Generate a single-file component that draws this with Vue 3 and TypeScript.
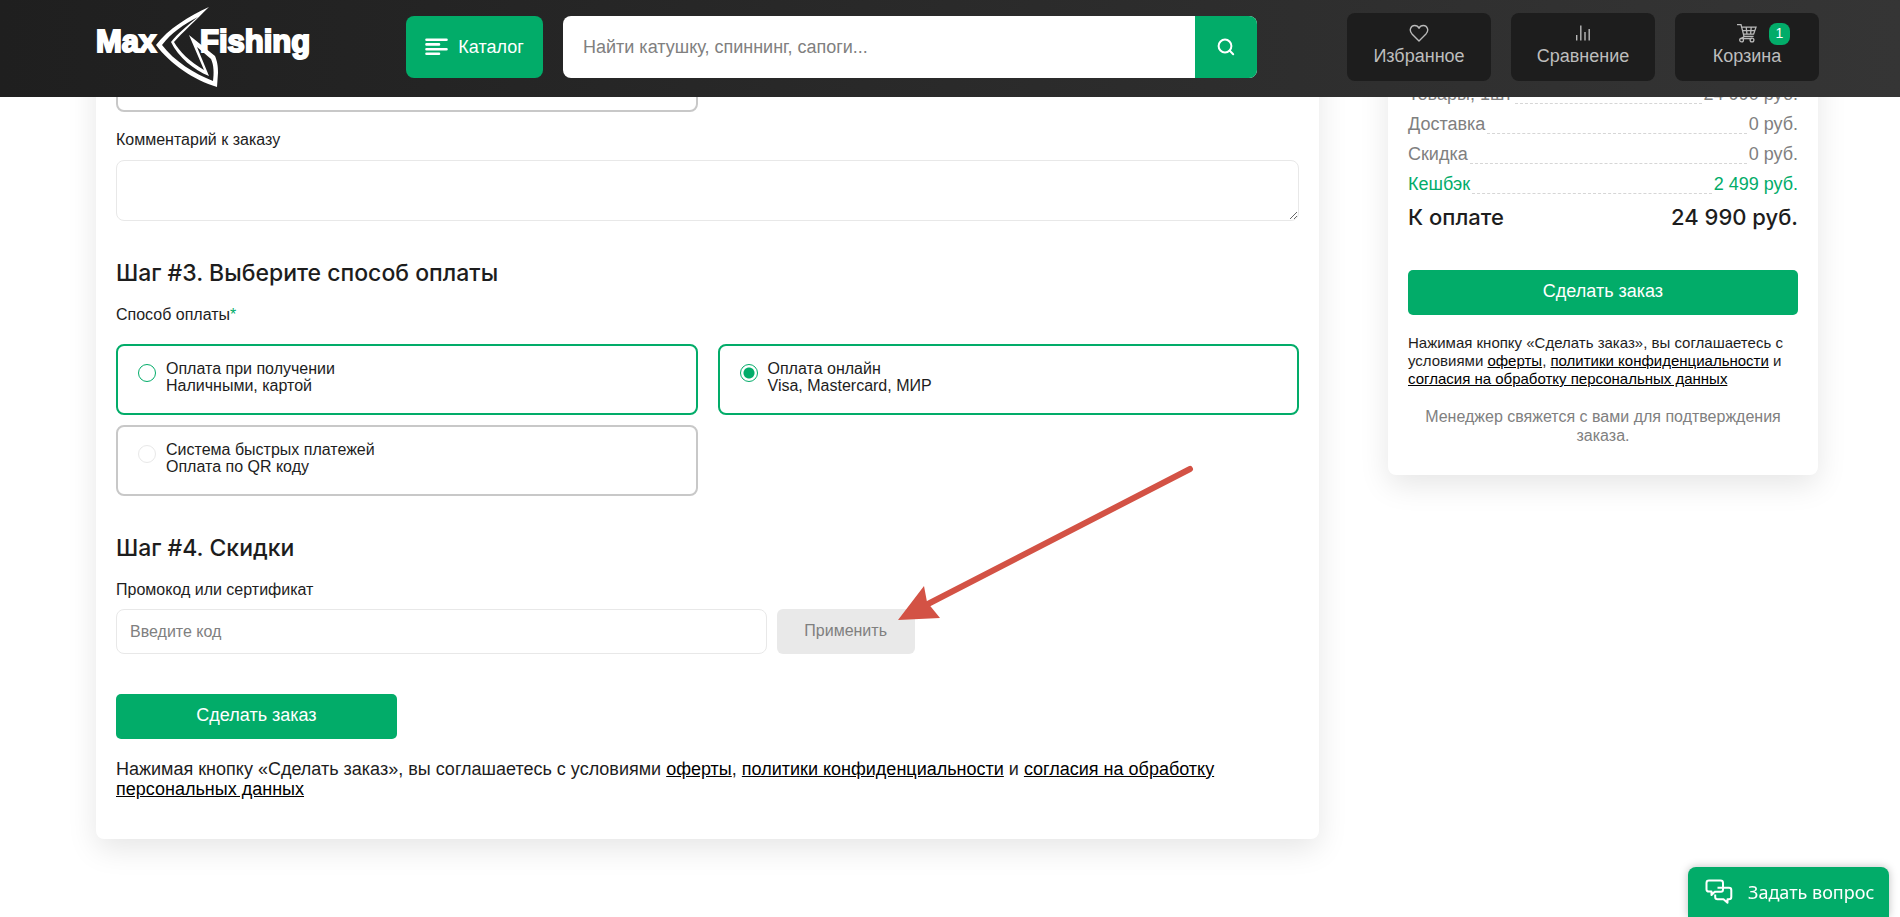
<script setup lang="ts">
import { ref } from 'vue'

interface Payment {
  id: string
  title: string
  note: string
  outlined: boolean
}

interface SummaryRow {
  label: string
  value: string
  accent?: boolean
}

const payments: Payment[] = [
  { id: 'cash', title: 'Оплата при получении', note: 'Наличными, картой', outlined: true },
  { id: 'online', title: 'Оплата онлайн', note: 'Visa, Mastercard, МИР', outlined: true },
  { id: 'sbp', title: 'Система быстрых платежей', note: 'Оплата по QR коду', outlined: false },
]

const summary: SummaryRow[] = [
  { label: 'Товары, 1шт', value: '24 990 руб.' },
  { label: 'Доставка', value: '0 руб.' },
  { label: 'Скидка', value: '0 руб.' },
  { label: 'Кешбэк', value: '2 499 руб.', accent: true },
]

const payment = ref('online')
const comment = ref('')
const promo = ref('')
const query = ref('')
</script>

<template>
  <div class="page">
    <header class="header">
      <a class="logo" href="#" aria-label="Max Fishing">
        <svg width="220" height="82" viewBox="0 0 220 82">
          <g class="logo-text">
            <text x="0" y="46">Max</text>
            <text x="104" y="46">Fishing</text>
          </g>
          <path
            class="logo-fish"
            fill-rule="evenodd"
            d="M113 1 C93 10 72 23 60 39 C74 58 98 74 121 81 L122 67 C122 59 121 55 119 50 L93 29 L108 64 C94 56 83 45 78 36 C86 27 100 14 113 1 Z M102 11 C93 18 81 28 75 36 C82 51 98 64 113 70 L101 41 L115 53 C118 59 118 68 117 75 C99 68 78 55 66 39 C75 27 88 18 102 11 Z"
          />
        </svg>
      </a>

      <button class="catalog" type="button">
        <svg width="23" height="18" viewBox="0 0 23 18" stroke="#fff" stroke-width="2.6" stroke-linecap="round">
          <path d="M1.5 1.8H21.5M1.5 6.4H14M1.5 11.2H21.5M1.5 15.8H14" />
        </svg>
        <span>Каталог</span>
      </button>

      <form class="search" role="search" @submit.prevent>
        <input v-model="query" type="text" aria-label="Поиск" placeholder="Найти катушку, спиннинг, сапоги..." />
        <button type="submit" aria-label="Искать">
          <svg width="18" height="18" viewBox="0 0 18 18" fill="none" stroke="#fff" stroke-width="2" stroke-linecap="round">
            <circle cx="8" cy="8" r="6.4" />
            <path d="M12.8 12.8L16.2 16.2" />
          </svg>
        </button>
      </form>

      <nav class="tools">
        <a class="tool" href="#">
          <svg width="20" height="20" viewBox="0 0 20 20" fill="none" stroke="#b9b9b9" stroke-width="1.4" stroke-linejoin="round">
            <path d="M10 18L3 10.9C-.6 6.9 2.2 2.5 5.6 2.5C7.8 2.5 9.3 3.7 10 5.3C10.7 3.7 12.2 2.5 14.4 2.5C17.8 2.5 20.6 6.9 17 10.9Z" />
          </svg>
          <span>Избранное</span>
        </a>
        <a class="tool" href="#">
          <svg width="20" height="20" viewBox="0 0 20 20" stroke="#b9b9b9" stroke-width="1.4">
            <path d="M3.7 12V17.5M7.8 2.5V17.5M12 9V17.5M16.2 6V17.5" />
          </svg>
          <span>Сравнение</span>
        </a>
        <a class="tool" href="#">
          <svg width="20" height="20" viewBox="0 0 20 20" fill="none" stroke="#b9b9b9" stroke-width="1.3">
            <path d="M0 1.7H4L7 13.4H16.6M4.6 4.2H19L16.6 11.2H6.5M5.4 7.6H17.8M9.2 4.2L10 11.2M14.2 4.2L13.6 11.2M7 13.4L4.5 15.5H15" />
            <circle cx="4.6" cy="17" r="1.9" />
            <circle cx="15" cy="17" r="1.9" />
          </svg>
          <span>Корзина</span>
          <b class="badge">1</b>
        </a>
      </nav>
    </header>

    <main class="content">
      <form class="card checkout" @submit.prevent>
        <div class="delivery-option"></div>

        <label class="label" for="comment">Комментарий к заказу</label>
        <textarea id="comment" v-model="comment" class="comment"></textarea>

        <h2>Шаг #3. Выберите способ оплаты</h2>
        <p id="payment-label" class="label">Способ оплаты<span class="required">*</span></p>
        <div class="payments" role="radiogroup" aria-labelledby="payment-label">
          <label
            v-for="item in payments"
            :key="item.id"
            class="payment"
            :class="{ outlined: item.outlined }"
            :for="item.id"
          >
            <input :id="item.id" v-model="payment" type="radio" name="payment" :value="item.id" />
            <span>{{ item.title }}<br />{{ item.note }}</span>
          </label>
        </div>

        <h2>Шаг #4. Скидки</h2>
        <label class="label" for="promo">Промокод или сертификат</label>
        <div class="promo">
          <input id="promo" v-model="promo" type="text" placeholder="Введите код" />
          <div class="apply">
            <button type="button">Применить</button>
            <svg class="arrow" width="300" height="160" viewBox="0 0 300 160" aria-hidden="true">
              <path d="M293 5L27 142" stroke="#d35245" stroke-width="6" stroke-linecap="round" />
              <path d="M1 156L27 122L30 138L43 154Z" fill="#d35245" />
            </svg>
          </div>
        </div>

        <button class="order" type="submit">Сделать заказ</button>
        <p class="terms">
          Нажимая кнопку «Сделать заказ», вы соглашаетесь с условиями <a href="#">оферты</a>,
          <a href="#">политики конфиденциальности</a> и <a href="#">согласия на обработку персональных данных</a>
        </p>
      </form>

      <aside class="card totals">
        <dl>
          <div v-for="row in summary" :key="row.label" class="row" :class="{ accent: row.accent }">
            <dt>{{ row.label }}</dt>
            <dd>{{ row.value }}</dd>
          </div>
          <div class="total">
            <dt>К оплате</dt>
            <dd>24 990 руб.</dd>
          </div>
        </dl>
        <button class="order" type="button">Сделать заказ</button>
        <p class="terms">
          Нажимая кнопку «Сделать заказ», вы соглашаетесь с условиями <a href="#">оферты</a>,
          <a href="#">политики конфиденциальности</a> и <a href="#">согласия на обработку персональных данных</a>
        </p>
        <p class="note">Менеджер свяжется с вами для подтверждения заказа.</p>
      </aside>
    </main>

    <button class="chat" type="button">
      <svg width="28" height="26" viewBox="0 0 28 26" fill="none" stroke="#fff" stroke-width="2" stroke-linejoin="round">
        <path d="M10 12.5L6.5 16V12.5H4C2.5 12.5 1.5 11.7 1.5 10.4V4C1.5 2.6 2.5 1.6 4 1.6H15.5C17 1.6 18 2.6 18 4V8.5" />
        <path d="M12.5 8.8H24C25.5 8.8 26.3 9.6 26.3 11V18C26.3 19.4 25.5 20.2 24 20.2H22.5V23.7L18.5 20.2H12.5C11 20.2 10.2 19.4 10.2 18V15.5" />
        <path d="M18 8.5V10.5C18 12 17.2 12.7 16 12.7H9.5" />
      </svg>
      <span>Задать вопрос</span>
    </button>
  </div>
</template>

<style>
body {
  margin: 0;
  background: #fff;
}
</style>

<style scoped>
.page {
  min-height: 100vh;
  overflow: hidden;
  color: #1d1d1d;
  font-family: 'Liberation Sans', Arial, sans-serif;
  font-size: 16px;
  line-height: 18px;
}

.page *,
.page *::before {
  box-sizing: border-box;
}

button,
input,
textarea {
  margin: 0;
  border: 0;
  font: inherit;
}

button {
  cursor: pointer;
}

h2,
p,
dl,
dd {
  margin: 0;
}

.header {
  position: fixed;
  z-index: 10;
  inset: 0 0 auto;
  display: flex;
  align-items: center;
  height: 97px;
  padding: 0 81px 3px 96px;
  background: linear-gradient(90deg, #1f1f1f, #353535);
}

.logo {
  display: flex;
  width: 310px;
}

.logo svg {
  display: block;
  overflow: visible;
}

.logo-text {
  fill: #fff;
  stroke: #fff;
  stroke-width: 2;
  font-size: 31px;
  font-weight: 700;
}

.logo-fish {
  fill: #fff;
}

.catalog {
  display: flex;
  align-items: center;
  justify-content: center;
  gap: 10px;
  width: 137px;
  height: 62px;
  border-radius: 8px;
  background: #02ac69;
  color: #fff;
  font-size: 18px;
}

.search {
  display: flex;
  flex: 1;
  height: 62px;
  margin: 0 90px 0 20px;
  overflow: hidden;
  border-radius: 8px;
  background: #fff;
}

.search input {
  flex: 1;
  min-width: 0;
  padding: 0 20px;
  background: none;
  font-size: 18px;
  outline: none;
}

input::placeholder {
  color: #808080;
  opacity: 1;
}

.search button {
  display: flex;
  align-items: center;
  justify-content: center;
  width: 62px;
  background: #02ac69;
}

.tools {
  display: flex;
  gap: 20px;
}

.tool {
  position: relative;
  display: flex;
  flex-direction: column;
  align-items: center;
  gap: 3px;
  width: 144px;
  height: 68px;
  padding-top: 10px;
  border-radius: 8px;
  background: #1d1d1d;
  color: #bdbdbd;
  font-size: 18px;
  line-height: 20px;
  text-decoration: none;
}

.badge {
  position: absolute;
  top: 10px;
  left: 94px;
  width: 21px;
  height: 22px;
  border-radius: 8px;
  background: #02ac69;
  color: #fff;
  font-size: 14px;
  font-weight: 400;
  line-height: 20px;
  text-align: center;
}

.content {
  display: flex;
  align-items: flex-start;
  gap: 69px;
  padding: 0 82px 78px 96px;
}

.card {
  padding: 0 20px;
  border-radius: 8px;
  background: #fff;
  box-shadow: 0 10px 30px rgba(0, 0, 0, 0.1);
}

.checkout {
  flex: 1;
  min-width: 0;
  padding-bottom: 40px;
}

.delivery-option {
  width: calc(50% - 10px);
  height: 112px;
  margin-bottom: 19px;
  border: 2px solid #c8c8c8;
  border-radius: 8px;
}

.label {
  display: block;
}

.comment {
  display: block;
  width: 100%;
  height: 61px;
  margin: 11px 0 40px;
  padding: 12px;
  border: 1px solid #e8e8e8;
  border-radius: 8px;
  background: #fff;
  outline: none;
}

h2 {
  margin-bottom: 21px;
  font-family: Inter, 'Liberation Sans', sans-serif;
  font-size: 23px;
  font-weight: 500;
  line-height: 24px;
}

.required {
  color: #02ac69;
}

.payments {
  display: grid;
  grid-template-columns: 1fr 1fr;
  gap: 10px 20px;
  margin: 20px 0 40px;
}

.payment {
  display: flex;
  gap: 10px;
  height: 71px;
  padding: 14px 20px;
  border: 2px solid #c8c8c8;
  border-radius: 8px;
  line-height: 17px;
}

.payment input {
  flex: none;
  width: 18px;
  height: 18px;
  margin-top: 4px;
  border: 1px solid #e8e8e8;
  border-radius: 50%;
  appearance: none;
}

.payment.outlined,
.payment.outlined input {
  border-color: #02ac69;
}

.payment input:checked {
  background: radial-gradient(circle, #02ac69 5px, #fff 6px);
}

.promo {
  display: flex;
  gap: 10px;
  height: 45px;
  margin: 10px 0 40px;
}

.promo input {
  width: 55%;
  padding: 0 13px;
  border: 1px solid #e8e8e8;
  border-radius: 8px;
  outline: none;
}

.apply {
  position: relative;
}

.apply button {
  width: 138px;
  height: 45px;
  padding-bottom: 2px;
  border-radius: 6px;
  background: #e9e9e9;
  color: #808080;
}

.arrow {
  position: absolute;
  top: -145px;
  left: 120px;
  pointer-events: none;
}

.order {
  display: block;
  width: 281px;
  height: 45px;
  padding-bottom: 4px;
  border-radius: 5px;
  background: #02ac69;
  color: #fff;
  font-size: 18px;
}

.terms a {
  color: #000;
}

.checkout .terms {
  margin-top: 20px;
  font-size: 18px;
  line-height: 20px;
}

.totals {
  width: 430px;
  padding-top: 80px;
  padding-bottom: 30px;
}

.row,
.total {
  display: flex;
}

.row {
  height: 30px;
  color: #808080;
  font-size: 18px;
  line-height: 28px;
}

.row::before {
  flex: 1;
  order: 1;
  height: 24px;
  margin: 0 2px;
  border-bottom: 1px dashed #d6d6d6;
  content: '';
}

.row dd {
  order: 2;
}

.row.accent {
  color: #02ac69;
}

.total {
  justify-content: space-between;
  font-family: Inter, 'Liberation Sans', sans-serif;
  font-size: 22px;
  font-weight: 500;
  line-height: 34px;
}

.totals .order {
  width: 100%;
  margin: 36px 0 19px;
}

.totals .terms {
  font-size: 15px;
}

.totals .note {
  margin-top: 19px;
  color: #808080;
  line-height: 19px;
  text-align: center;
}

.chat {
  position: fixed;
  right: 11px;
  bottom: 0;
  display: flex;
  align-items: center;
  gap: 15px;
  width: 201px;
  height: 50px;
  padding: 0 17px;
  border-radius: 8px 8px 0 0;
  background: #02ac69;
  box-shadow: 0 0 8px rgba(0, 0, 0, 0.25);
  color: #fff;
  font-family: 'Noto Sans', 'Open Sans', sans-serif;
  font-size: 18px;
  white-space: nowrap;
}

.chat svg {
  flex: none;
}
</style>
